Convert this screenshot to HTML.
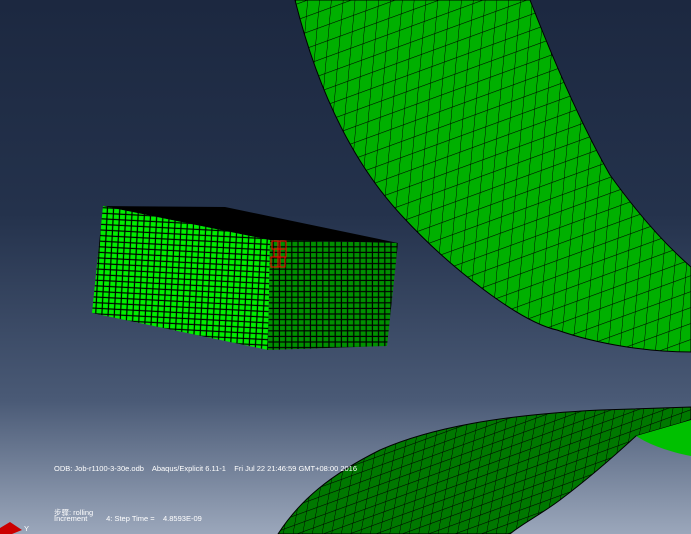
<!DOCTYPE html>
<html><head><style>
html,body{margin:0;padding:0;}
body{width:691px;height:534px;overflow:hidden;background:linear-gradient(to bottom,#1c2840 0%,#24324c 40%,#4a5a76 75%,#9ba7bb 100%);position:relative;font-family:"Liberation Sans",sans-serif;}
.t{position:absolute;color:#fff;font-size:7.5px;white-space:pre;letter-spacing:0px;}
</style></head><body>
<svg width="691" height="534" style="position:absolute;left:0;top:0">
<defs>
<pattern id="pu" width="13" height="15" patternUnits="userSpaceOnUse" patternTransform="rotate(-20) skewX(-25)">
<rect width="13" height="15" fill="#00b000"/><path d="M0 0H13M0 0V15" stroke="#000" stroke-width="1"/></pattern>
<pattern id="pl" width="11" height="9" patternUnits="userSpaceOnUse" patternTransform="rotate(-20) skewX(-30)">
<rect width="11" height="9" fill="#007800"/><path d="M0 0H11M0 0V9" stroke="#000" stroke-width="1"/></pattern>
<pattern id="pa" width="6.2" height="5.6" patternUnits="userSpaceOnUse" patternTransform="rotate(3)">
<rect width="6.2" height="5.6" fill="#000"/><rect x="1" y="1" width="5" height="4.4" fill="#00ee00"/></pattern>
<pattern id="pb" width="6.2" height="5.6" patternUnits="userSpaceOnUse">
<rect width="6.2" height="5.6" fill="#000"/><rect x="1" y="1" width="5" height="4.4" fill="#009000"/></pattern>
</defs>
<path d="M295 0 C310 60 340 150 403 217 C450 268 520 322 557 330 C600 345 650 352 691 352 L691 267 C660 240 633 207 610 175 C590 140 565 90 530 0 Z" fill="url(#pu)" stroke="#000"/>
<path d="M278 534 C300 500 330 475 380 450 C430 428 500 415 600 410 L691 407 L691 420 L636 436 C610 460 580 485 560 500 C540 515 520 525 510 534 Z" fill="url(#pl)" stroke="#000"/>
<path d="M636 436 L691 420 L691 456 C670 452 650 445 636 436Z" fill="#00c000"/>
<path d="M103 206 L225 207 L398 243 L270 240 Z" fill="#000"/>
<path d="M103 206 L270 240 L268 350 L92 313 Z" fill="url(#pa)"/>
<path d="M270 240 L398 243 L387 346 L268 350 Z" fill="url(#pb)"/>
<g fill="none" stroke="#f00" stroke-width="1"><rect x="272" y="241" width="14" height="8"/><rect x="274" y="249" width="12" height="8"/><rect x="271" y="257" width="14" height="10"/><path d="M278 241V267M280 241V267"/></g>
<path d="M0 528 L10 522 L22 530 L12 534 L0 534Z" fill="#c00"/>
</svg>
<div class="t" style="left:54px;top:464px">ODB: Job-r1100-3-30e.odb    Abaqus/Explicit 6.11-1    Fri Jul 22 21:46:59 GMT+08:00 2016</div>
<div class="t" style="left:54px;top:507px">步骤: rolling</div>
<div class="t" style="left:54px;top:514px">Increment         4: Step Time =    4.8593E-09</div>
<div class="t" style="left:24px;top:524px">Y</div>
</body></html>
